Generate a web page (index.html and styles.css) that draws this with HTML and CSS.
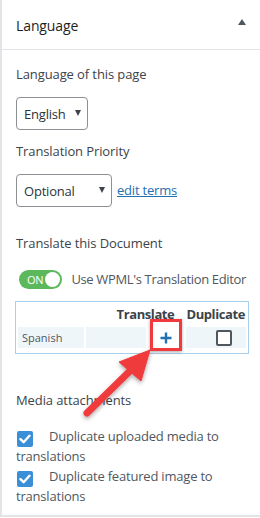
FILE: index.html
```html
<!DOCTYPE html>
<html>
<head>
<meta charset="utf-8">
<link rel="stylesheet" href="styles.css">
</head>
<body>
<div class="panel">
  <div class="panel-header">
    <span class="panel-title">Language</span>
    <span class="toggle-arrow"></span>
  </div>
  <div class="panel-body">
    <div class="label first">Language of this page</div>
    <div class="select select-lang"><span>English</span><span class="caret"></span></div>

    <div class="label">Translation Priority</div>
    <div class="priority-row">
      <div class="select select-priority"><span>Optional</span><span class="caret"></span></div>
      <a class="edit-link" href="#">edit terms</a>
    </div>

    <div class="label label-doc">Translate this Document</div>
    <div class="toggle-row">
      <span class="switch"><span class="switch-text">ON</span><span class="knob"></span></span>
      <span class="switch-label">Use WPML's Translation Editor</span>
    </div>

    <div class="trans-table">
      <div class="thead">
        <span>Translate</span>
        <span>Duplicate</span>
      </div>
      <div class="trow">
        <div class="cell cell-lang">Spanish</div>
        <div class="cell"></div>
        <div class="cell cell-plus">
          <svg width="12" height="12" viewBox="0 0 12 12"><path d="M6 0.5V11.5M0.5 6H11.5" stroke="#2271b1" stroke-width="2.4" fill="none"/></svg>
        </div>
        <div class="cell cell-dup"><span class="box"></span></div>
      </div>
      <div class="highlight"></div>
    </div>

    <div class="label label-media">Media attachments</div>
    <p class="check-line first-check"><span class="cb"><svg width="12" height="10" viewBox="0 0 12 10"><path d="M1.5 5.2L4.6 8.2L10.5 1.8" stroke="#fff" stroke-width="2.4" fill="none" stroke-linecap="round" stroke-linejoin="round"/></svg></span>Duplicate uploaded media to translations</p>
    <p class="check-line"><span class="cb"><svg width="12" height="10" viewBox="0 0 12 10"><path d="M1.5 5.2L4.6 8.2L10.5 1.8" stroke="#fff" stroke-width="2.4" fill="none" stroke-linecap="round" stroke-linejoin="round"/></svg></span>Duplicate featured image to translations</p>
  </div>
  <svg class="arrow" width="260" height="518" viewBox="0 0 260 518">
    <defs>
      <filter id="sh" x="-20%" y="-20%" width="140%" height="140%">
        <feDropShadow dx="0" dy="2" stdDeviation="2" flood-color="#000" flood-opacity="0.35"/>
      </filter>
    </defs>
    <g filter="url(#sh)" fill="#f03a3e" stroke="#f03a3e">
      <line x1="87" y1="413" x2="132" y2="369" stroke-width="7" stroke-linecap="round"/>
      <polygon points="150,350 119,362 141,381" stroke-width="1" stroke-linejoin="round"/>
    </g>
  </svg>
</div>
</body>
</html>
```

FILE: styles.css
```css
html, body {
  margin: 0;
  padding: 0;
  background: #ffffff;
}

body {
  font-family: "Open Sans", "Noto Sans", sans-serif;
  font-size: 13px;
  color: #3c434a;
  width: 260px;
  height: 518px;
  overflow: hidden;
}

.panel {
  position: relative;
  box-sizing: border-box;
  width: 260px;
  height: 517px;
  border-left: 2px solid #e2e4e7;
  border-bottom: 2px solid #e2e4e7;
}

.panel-header {
  box-sizing: border-box;
  height: 50px;
  border-bottom: 1px solid #e2e4e7;
  display: flex;
  align-items: center;
  justify-content: space-between;
  padding: 0 14px 0 14px;
}

.panel-title {
  font-size: 14px;
  letter-spacing: -0.1px;
  color: #1e1e1e;
  margin-top: 2px;
}

.toggle-arrow {
  width: 0;
  height: 0;
  border-left: 4px solid transparent;
  border-right: 4px solid transparent;
  border-bottom: 6px solid #50575e;
  margin-right: 0;
  margin-top: -6px;
}

.panel-body {
  padding: 0 14px;
}

.label {
  line-height: 20px;
  margin-top: 11px;
  letter-spacing: -0.1px;
  color: #3c434a;
}

.label.first {
  margin-top: 14px;
}

.label-doc {
  margin-top: 26px;
}

.label-media {
  margin-top: 36px;
}

.select {
  box-sizing: border-box;
  height: 33px;
  border: 1px solid #8c8f94;
  border-radius: 4px;
  display: flex;
  align-items: center;
  justify-content: space-between;
  padding: 0 6px 0 7px;
  margin-top: 13px;
  color: #2c3338;
  letter-spacing: -0.2px;
}

.select-lang {
  width: 72px;
}

.select-priority {
  width: 96px;
  margin-top: 0;
}

.caret {
  width: 0;
  height: 0;
  border-left: 3.5px solid transparent;
  border-right: 3.5px solid transparent;
  border-top: 6px solid #3c434a;
  margin-top: -2px;
}

.priority-row {
  display: flex;
  align-items: center;
  margin-top: 13px;
}

.edit-link {
  color: #2271b1;
  margin-left: 5px;
  letter-spacing: -0.2px;
  margin-top: -2px;
}

.toggle-row {
  display: flex;
  align-items: center;
  margin-top: 16px;
  height: 20px;
}

.switch {
  position: relative;
  box-sizing: border-box;
  width: 47px;
  height: 19px;
  border-radius: 10px;
  background: #5cb85c;
  margin-left: 3px;
  display: flex;
  align-items: center;
}

.switch-text {
  color: #ffffff;
  font-size: 11px;
  margin-left: 8px;
  letter-spacing: -0.2px;
}

.knob {
  position: absolute;
  right: 2px;
  top: 2px;
  width: 15px;
  height: 15px;
  border-radius: 50%;
  background: #ffffff;
}

.switch-label {
  margin-left: 9px;
  color: #50575e;
  letter-spacing: -0.35px;
  white-space: nowrap;
}

.trans-table {
  position: relative;
  box-sizing: border-box;
  width: 234px;
  margin-left: -1px;
  margin-top: 12px;
  border: 1px solid #a9d0ec;
  padding: 0 2px 5px 2px;
}

.thead {
  height: 23px;
  display: flex;
  justify-content: flex-end;
  align-items: center;
  gap: 12px;
  padding-right: 1px;
  font-weight: 700;
  color: #3c434a;
  letter-spacing: -0.4px;
}

.trow {
  display: grid;
  grid-template-columns: 66px 60px 36px 60px;
  gap: 2px;
  margin-top: 2px;
}

.cell {
  height: 21px;
  background: #eff6fa;
  display: flex;
  align-items: center;
}

.cell-lang {
  font-size: 11px;
  padding-left: 4px;
  color: #50575e;
}

.cell-plus {
  justify-content: center;
  background: #ffffff;
}

.cell-dup {
  justify-content: flex-end;
  padding-right: 14px;
}

.box {
  box-sizing: border-box;
  width: 16px;
  height: 16px;
  border: 2px solid #50575e;
  border-radius: 2px;
  background: #ffffff;
}

.highlight {
  position: absolute;
  left: 134px;
  top: 17px;
  width: 32px;
  height: 32px;
  box-sizing: border-box;
  border: 3px solid #f03a3e;
  box-shadow: 0 1px 3px rgba(0, 0, 0, 0.35);
}

.check-line {
  margin: 1px 0 0 0;
  line-height: 19px;
  letter-spacing: -0.2px;
  color: #50575e;
}

.first-check {
  margin-top: 17px;
}

.cb {
  display: inline-flex;
  align-items: center;
  justify-content: center;
  width: 16px;
  height: 16px;
  border-radius: 2px;
  background: #3b8fd6;
  vertical-align: -3px;
  margin-left: 1px;
  margin-right: 16px;
}

.arrow {
  position: absolute;
  left: -2px;
  top: 0;
  pointer-events: none;
}
```
